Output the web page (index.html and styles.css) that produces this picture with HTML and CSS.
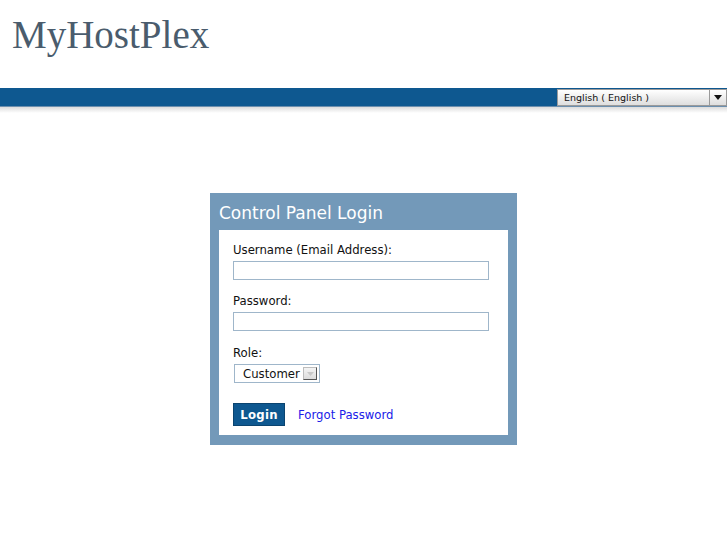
FILE: index.html
```html
<!DOCTYPE html>
<html>
<head>
<meta charset="utf-8">
<link rel="stylesheet" href="styles.css">
</head>
<body>
<header class="top">
  <div class="logo">MyHostPlex</div>
</header>
<div class="bar">
  <div class="lang">
    <span class="lang-text">English ( English )</span>
    <span class="lang-arrow"><svg width="8" height="5" viewBox="0 0 8 5"><path d="M0 0H8L4 5Z" fill="#111"/></svg></span>
  </div>
</div>
<div class="shadow"></div>
<main class="main">
  <div class="box">
    <h1 class="box-title">Control Panel Login</h1>
    <div class="box-body">
      <label class="lbl">Username (Email Address):</label>
      <div class="input"></div>
      <label class="lbl">Password:</label>
      <div class="input"></div>
      <label class="lbl role-lbl">Role:</label>
      <div class="role">
        <span class="role-text">Customer</span>
        <span class="role-arrow"><svg width="7" height="4" viewBox="0 0 7 4"><path d="M0 0H7L3.5 4Z" fill="#c8c8c8"/></svg></span>
      </div>
      <div class="actions">
        <span class="btn">Login</span>
        <a class="link" href="#">Forgot Password</a>
      </div>
    </div>
  </div>
</main>
</body>
</html>
```

FILE: styles.css
```css
html, body {
  margin: 0;
  padding: 0;
  background: #fff;
  font-family: "DejaVu Sans", sans-serif;
}
.top {
  height: 88px;
  box-sizing: border-box;
  padding-left: 12px;
  padding-top: 12px;
}
.logo {
  font-family: "Liberation Serif", serif;
  font-size: 39px;
  line-height: 46px;
  color: #4a5c6d;
}
.bar {
  height: 18px;
  background: #0e5890;
  border-bottom: 1px solid #6c8fae;
  display: flex;
  justify-content: flex-end;
  align-items: center;
}
.shadow {
  height: 6px;
  background: linear-gradient(#dcdcdc, #fff);
}
.lang {
  width: 170px;
  height: 17px;
  box-sizing: border-box;
  margin-top: 1px;
  border: 1px solid #9a9a9a;
  background: linear-gradient(#ffffff, #dedede);
  display: flex;
  align-items: center;
}
.lang-text {
  flex: 1;
  font-size: 9.5px;
  color: #111;
  padding-left: 6px;
}
.lang-arrow {
  width: 16px;
  height: 100%;
  border-left: 1px solid #9a9a9a;
  display: flex;
  align-items: center;
  justify-content: center;
}
.main {
  display: flex;
  justify-content: center;
  padding-top: 80px;
}
.box {
  width: 307px;
  background: #7399b9;
  padding: 0 9px 10px;
  box-sizing: border-box;
}
.box-title {
  margin: 0;
  height: 37px;
  font-size: 17px;
  font-weight: normal;
  color: #fff;
  line-height: 40px;
}
.box-body {
  background: #fff;
  padding: 12px 14px 9px;
  display: flex;
  flex-direction: column;
  align-items: flex-start;
}
.lbl {
  font-size: 11.7px;
  line-height: 16px;
  color: #111;
  margin-bottom: 3px;
}
.role-lbl {
  margin-top: 1px;
}
.input {
  width: 256px;
  height: 19px;
  box-sizing: border-box;
  border: 1px solid #9fb6ca;
  margin-bottom: 13px;
}
.role {
  margin-left: 1px;
  width: 86px;
  height: 19px;
  box-sizing: border-box;
  border: 1px solid #9fb6ca;
  display: flex;
  align-items: center;
}
.role-text {
  flex: 1;
  font-size: 11.7px;
  padding-left: 8px;
  color: #111;
}
.role-arrow {
  width: 14px;
  height: 13px;
  margin-right: 2px;
  background: linear-gradient(#f4f4f4, #dcdcdc);
  border: 1px solid #bdbdbd;
  border-right-color: #555;
  border-bottom-color: #555;
  box-sizing: border-box;
  display: flex;
  align-items: center;
  justify-content: center;
}
.actions {
  margin-top: 20px;
  display: flex;
  align-items: center;
}
.btn {
  width: 52px;
  height: 23px;
  box-sizing: border-box;
  background: #0e5890;
  border: 1px solid #0a4470;
  color: #fff;
  font-weight: bold;
  font-size: 11.7px;
  display: flex;
  align-items: center;
  justify-content: center;
  letter-spacing: 0.3px;
}
.link {
  margin-left: 13px;
  font-size: 11.7px;
  color: #2020e8;
  text-decoration: none;
}
```
